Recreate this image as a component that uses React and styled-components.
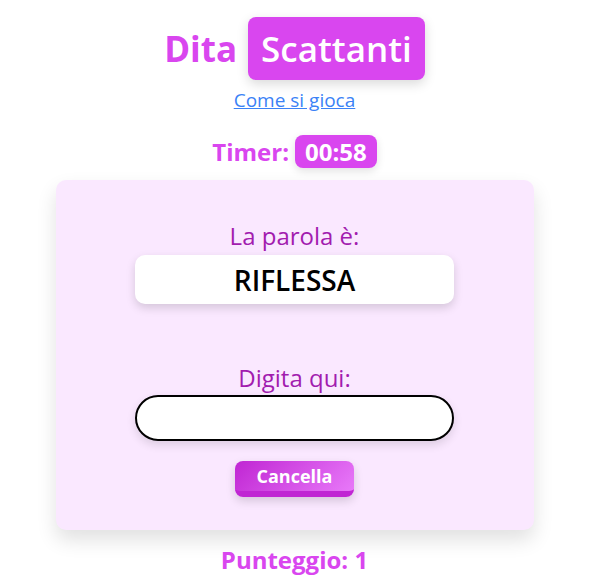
import React from 'react';
import styled, { createGlobalStyle } from 'styled-components';

const GlobalStyle = createGlobalStyle`
  body {
    margin: 0;
    background: #ffffff;
    font-family: 'Open Sans', 'Noto Sans', sans-serif;
  }
`;

const Page = styled.div`
  display: flex;
  flex-direction: column;
  align-items: center;
  padding-top: 17px;
`;

const TitleRow = styled.h1`
  display: flex;
  align-items: center;
  gap: 11px;
  margin: 0;
  font-size: 35px;
  font-weight: 700;
  color: #d946ef;
`;

const TitleBadge = styled.span`
  display: inline-flex;
  align-items: center;
  height: 63px;
  padding: 0 13px;
  border-radius: 8px;
  background: #d946ef;
  color: #ffffff;
  font-weight: 600;
  box-shadow: 0 4px 12px rgba(0, 0, 0, 0.15);
`;

const HelpLink = styled.a`
  margin-top: 7px;
  font-size: 19px;
  color: #3b82f6;
  text-decoration: underline;
  cursor: pointer;
`;

const TimerRow = styled.div`
  display: flex;
  align-items: center;
  gap: 6px;
  margin-top: 22px;
  font-size: 24px;
  font-weight: 700;
  color: #d946ef;
`;

const TimerBadge = styled.span`
  display: inline-flex;
  align-items: center;
  height: 33px;
  padding: 0 10px;
  border-radius: 8px;
  background: #d946ef;
  color: #ffffff;
  box-shadow: 0 3px 8px rgba(0, 0, 0, 0.12);
`;

const Card = styled.div`
  display: flex;
  flex-direction: column;
  align-items: center;
  width: 478px;
  box-sizing: border-box;
  margin-top: 12px;
  padding: 41px 0 33px;
  border-radius: 10px;
  background: #fae8ff;
  box-shadow: 0 10px 20px rgba(0, 0, 0, 0.12);
`;

const Label = styled.div`
  font-size: 24px;
  color: #a21caf;
  line-height: 30px;
`;

const WordBox = styled.div`
  display: flex;
  align-items: center;
  justify-content: center;
  width: 319px;
  height: 49px;
  margin-top: 4px;
  margin-bottom: 59px;
  border-radius: 10px;
  background: #ffffff;
  color: #000000;
  font-size: 28px;
  font-weight: 600;
  box-shadow: 0 4px 10px rgba(0, 0, 0, 0.15);
`;

const TypeInput = styled.input`
  width: 319px;
  height: 46px;
  box-sizing: border-box;
  margin-top: 2px;
  border: 2px solid #000000;
  border-radius: 9999px;
  background: #ffffff;
  outline: none;
  box-shadow: 0 4px 10px rgba(0, 0, 0, 0.12);
`;

const ClearButton = styled.button`
  width: 119px;
  height: 36px;
  margin-top: 20px;
  border: none;
  border-bottom: 6px solid #c026d3;
  border-radius: 8px;
  background: linear-gradient(135deg, #c026d3, #e879f9);
  color: #ffffff;
  font-family: inherit;
  font-size: 18px;
  font-weight: 700;
  box-shadow: 0 4px 10px rgba(0, 0, 0, 0.15);
  cursor: pointer;
`;

const Score = styled.div`
  margin-top: 13px;
  font-size: 24px;
  font-weight: 700;
  color: #d946ef;
`;

export default function App() {
  return (
    <>
      <GlobalStyle />
      <Page>
        <TitleRow>
          Dita <TitleBadge>Scattanti</TitleBadge>
        </TitleRow>
        <HelpLink>Come si gioca</HelpLink>
        <TimerRow>
          Timer: <TimerBadge>00:58</TimerBadge>
        </TimerRow>
        <Card>
          <Label>La parola è:</Label>
          <WordBox>RIFLESSA</WordBox>
          <Label>Digita qui:</Label>
          <TypeInput type="text" />
          <ClearButton>Cancella</ClearButton>
        </Card>
        <Score>Punteggio: 1</Score>
      </Page>
    </>
  );
}
